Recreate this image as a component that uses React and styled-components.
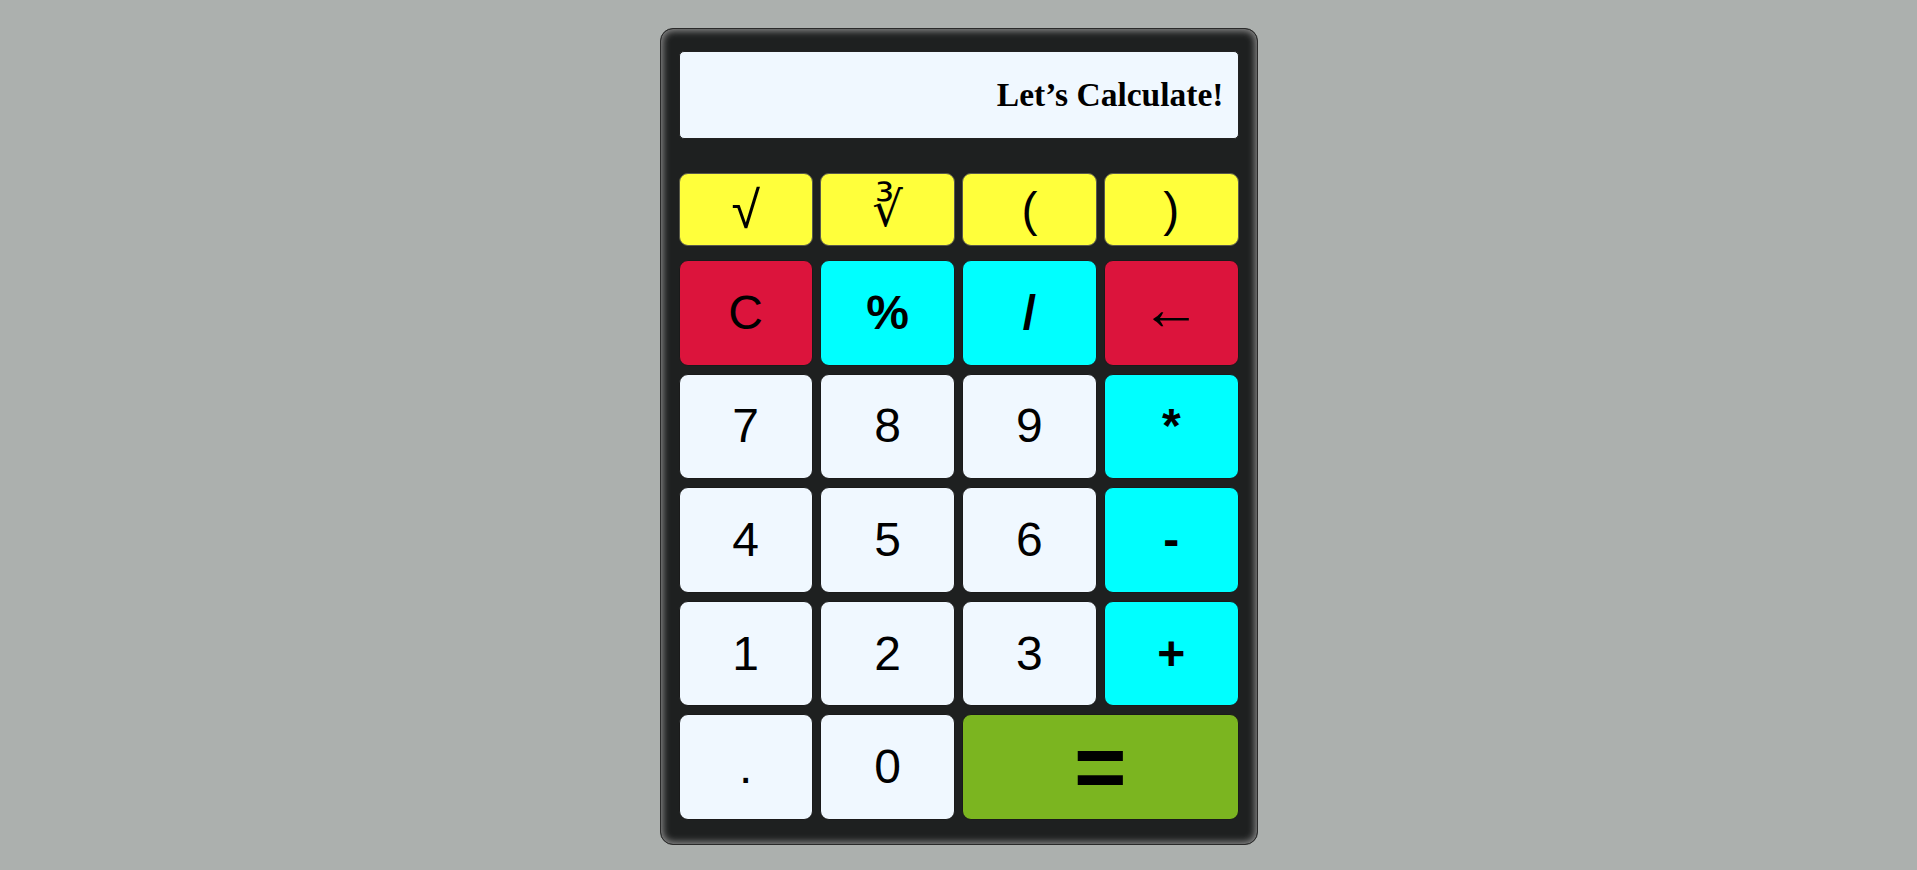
import React from 'react';
import styled, { createGlobalStyle } from 'styled-components';

const GlobalStyle = createGlobalStyle`
  html, body {
    margin: 0;
    padding: 0;
    background: #acb0ae;
  }
`;

const colors = {
  fn: { bg: '#ffff3b', border: '#5a5a4a' },
  clear: { bg: '#dc143c', border: '#1a1a1a' },
  op: { bg: '#00ffff', border: '#1a1a1a' },
  num: { bg: '#f0f8ff', border: '#1a1a1a' },
  equal: { bg: '#7bb520', border: '#1a1a1a' },
};

const Page = styled.div`
  display: flex;
  justify-content: center;
  padding-top: 28px;
`;

const Calculator = styled.div`
  box-sizing: border-box;
  width: 598px;
  height: 817px;
  padding: 22px 18px 24px;
  background: #1e2020;
  border: 1px solid #2a2a2a;
  border-radius: 13px;
  box-shadow: inset 0 0 7px 2px #8c8c8c;
  display: flex;
  flex-direction: column;
`;

const Screen = styled.div`
  box-sizing: border-box;
  height: 88px;
  background: #f0f8ff;
  border: 1px solid #222;
  border-radius: 5px;
  display: flex;
  align-items: center;
  justify-content: flex-end;
  padding: 0 14px 0 10px;
  font-family: "Liberation Serif", "Times New Roman", serif;
  font-weight: bold;
  font-size: 33.5px;
  color: #000;
  margin-bottom: 34px;
`;

const FnRow = styled.div`
  display: grid;
  grid-template-columns: repeat(4, 1fr);
  column-gap: 7.5px;
  height: 73px;
  margin-bottom: 14px;
`;

const Keypad = styled.div`
  display: grid;
  grid-template-columns: repeat(4, 1fr);
  grid-template-rows: repeat(5, 1fr);
  gap: 8px 7.5px;
  height: 560px;
`;

const Key = styled.button`
  box-sizing: border-box;
  margin: 0;
  padding: 0 0 ${(p) => p.$lift || 0}px;
  display: flex;
  align-items: center;
  justify-content: center;
  grid-column: span ${(p) => p.$span || 1};
  background: ${(p) => colors[p.$kind].bg};
  border: 1px solid ${(p) => colors[p.$kind].border};
  border-radius: 9px;
  color: #000;
  font-family: "Liberation Sans", Arial, "DejaVu Sans", sans-serif;
  font-size: ${(p) => p.$size || 48}px;
  font-weight: ${(p) => (p.$bold ? 'bold' : 'normal')};
  line-height: 1;
  cursor: pointer;
`;

const fnKeys = [
  { label: '√', size: 52 },
  { label: '∛' },
  { label: '(' },
  { label: ')' },
];

const keys = [
  { label: 'C', kind: 'clear' },
  { label: '%', kind: 'op', bold: true },
  { label: '/', kind: 'op', bold: true },
  { label: '←', kind: 'clear', size: 60, lift: 8 },
  { label: '7', kind: 'num' },
  { label: '8', kind: 'num' },
  { label: '9', kind: 'num' },
  { label: '*', kind: 'op', bold: true },
  { label: '4', kind: 'num' },
  { label: '5', kind: 'num' },
  { label: '6', kind: 'num' },
  { label: '-', kind: 'op', bold: true },
  { label: '1', kind: 'num' },
  { label: '2', kind: 'num' },
  { label: '3', kind: 'num' },
  { label: '+', kind: 'op', bold: true },
  { label: '.', kind: 'num' },
  { label: '0', kind: 'num' },
  { label: '=', kind: 'equal', bold: true, size: 90, span: 2 },
];

const App = () => {
  return (
    <Page>
      <GlobalStyle />
      <Calculator>
        <Screen>Let’s Calculate!</Screen>
        <FnRow>
          {fnKeys.map((k) => (
            <Key key={k.label} $kind="fn" $size={k.size}>
              {k.label}
            </Key>
          ))}
        </FnRow>
        <Keypad>
          {keys.map((k) => (
            <Key
              key={k.label}
              $kind={k.kind}
              $bold={k.bold}
              $size={k.size}
              $span={k.span}
              $lift={k.lift}
            >
              {k.label}
            </Key>
          ))}
        </Keypad>
      </Calculator>
    </Page>
  );
};

export default App;
